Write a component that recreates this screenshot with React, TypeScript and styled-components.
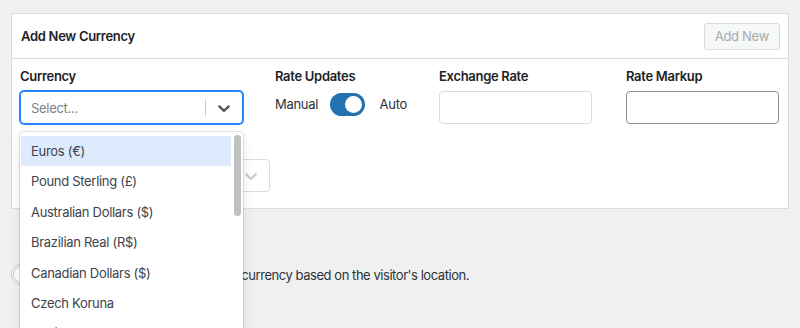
import React from "react";
import styled, { createGlobalStyle } from "styled-components";

const GlobalStyle = createGlobalStyle`
  html, body { margin: 0; padding: 0; overflow: hidden; }
  body {
    background: #f0f0f1;
    font-family: Inter, "Noto Sans", "Liberation Sans", sans-serif;
    font-size: 13px;
    letter-spacing: -0.3px;
    color: #1d2327;
    -webkit-font-smoothing: antialiased;
  }
  * { box-sizing: border-box; }
`;

const Page = styled.div`
  width: 800px;
  height: 328px;
  overflow: hidden;
  padding: 13px 11px 0 11px;
`;

const Card = styled.section`
  background: #fff;
  border: 1px solid #dcdcde;
`;

const CardHeader = styled.header`
  display: flex;
  align-items: center;
  justify-content: space-between;
  height: 45px;
  padding: 0 8px 0 9px;
  border-bottom: 1px solid #dcdcde;
`;

const Title = styled.h2`
  margin: 0;
  font-size: 13px;
  font-weight: 600;
  color: #1d2327;
`;

const Button = styled.button`
  height: 27px;
  padding: 0 10px;
  font-family: inherit;
  font-size: 13px;
  letter-spacing: -0.3px;
  color: #a7aaad;
  background: #f6f7f7;
  border: 1px solid #dcdcde;
  border-radius: 3px;
`;

const CardBody = styled.div`
  padding: 8px 8px 16px 8px;
  display: flex;
  flex-direction: column;
  gap: 11px;
`;

const FieldRow = styled.div`
  display: grid;
  grid-template-columns: 223px 132px 155px 153px;
  column-gap: 32px;
`;

const Field = styled.div<{ $w?: number }>`
  display: flex;
  flex-direction: column;
  gap: 6px;
  position: relative;
  width: ${(p) => (p.$w ? `${p.$w}px` : "auto")};
`;

const Label = styled.label`
  font-size: 13px;
  font-weight: 600;
  line-height: 18px;
  color: #1d2327;
`;

const Control = styled.div<{ $focused?: boolean }>`
  display: flex;
  align-items: center;
  height: 33px;
  background: #fff;
  border: 1px solid ${(p) => (p.$focused ? "#2684ff" : "#dcdcde")};
  box-shadow: ${(p) => (p.$focused ? "0 0 0 1px #2684ff" : "none")};
  border-radius: 4px;
`;

const ValueBox = styled.div`
  flex: 1;
  padding: 0 10px;
  color: #7e8185;
  font-size: 13px;
`;

const Separator = styled.span`
  align-self: stretch;
  width: 1px;
  margin: 7px 0;
  background: #cccccc;
`;

const Indicator = styled.div<{ $color: string }>`
  display: flex;
  align-items: center;
  justify-content: center;
  width: 36px;
  color: ${(p) => p.$color};
`;

const Input = styled.input<{ $dark?: boolean }>`
  width: 153px;
  height: 33px;
  border: 1px solid ${(p) => (p.$dark ? "#8c8f94" : "#dcdcde")};
  border-radius: 4px;
  background: #fff;
  font-family: inherit;
  font-size: 13px;
  outline: none;
`;

const ToggleRow = styled.div`
  display: flex;
  align-items: center;
  gap: 12px;
  height: 24px;
  margin-top: 1px;
  font-size: 13px;
  color: #2c3338;
`;

const Switch = styled.span<{ $on?: boolean }>`
  display: inline-flex;
  align-items: center;
  justify-content: ${(p) => (p.$on ? "flex-end" : "flex-start")};
  width: 37px;
  height: 23px;
  padding: 3px;
  border-radius: 12px;
  background: ${(p) => (p.$on ? "#2271b1" : "#fff")};
  border: ${(p) => (p.$on ? "none" : "1px solid #c3c4c7")};
`;

const Knob = styled.span`
  width: 17px;
  height: 17px;
  border-radius: 50%;
  background: #fff;
`;

const AutoText = styled.span`
  margin-left: 3px;
`;

const Menu = styled.div`
  position: absolute;
  top: 65px;
  left: 0;
  width: 223px;
  height: 300px;
  display: flex;
  background: #fff;
  border-radius: 4px;
  box-shadow: 0 0 0 1px rgba(0, 0, 0, 0.1), 0 4px 11px rgba(0, 0, 0, 0.1);
  overflow: hidden;
  z-index: 10;
`;

const OptionList = styled.ul`
  flex: 1;
  margin: 0;
  padding: 4px 0 0 1px;
  list-style: none;
`;

const Option = styled.li<{ $active?: boolean }>`
  height: 30.4px;
  line-height: 30.4px;
  padding: 0 10px;
  font-size: 13px;
  color: #3c434a;
  background: ${(p) => (p.$active ? "#deebff" : "transparent")};
  white-space: nowrap;
`;

const ScrollTrack = styled.div`
  width: 12px;
  padding: 3px 2px 0 3px;
`;

const ScrollThumb = styled.div`
  width: 7px;
  height: 81px;
  border-radius: 4px;
  background: #c1c1c1;
`;

const SettingRow = styled.div`
  display: flex;
  align-items: center;
  gap: 52px;
  margin-top: 55px;
  font-size: 13px;
  color: #2c3338;
`;

const SettingText = styled.span`
  letter-spacing: -0.45px;
`;

const OffSwitch = styled(Switch)`
  width: 36px;
  height: 21px;
  padding: 1px;
  background: #fff;
  border: 1px solid #c3c4c7;
`;

const OffKnob = styled.span`
  width: 17px;
  height: 17px;
  border-radius: 50%;
  background: #fff;
  border: 1px solid #c3c4c7;
`;

const Chevron = () => (
  <svg width="20" height="20" viewBox="0 0 20 20" fill="currentColor" aria-hidden>
    <path d="M4.516 7.548c0.436-0.446 1.043-0.481 1.576 0l3.908 3.747 3.908-3.747c0.533-0.481 1.141-0.446 1.574 0 0.436 0.445 0.408 1.197 0 1.615-0.406 0.418-4.695 4.502-4.695 4.502-0.217 0.223-0.502 0.335-0.787 0.335s-0.57-0.112-0.789-0.335c0 0-4.287-4.084-4.695-4.502s-0.436-1.170 0-1.615z" />
  </svg>
);

const currencies = [
  "Euros (€)",
  "Pound Sterling (£)",
  "Australian Dollars ($)",
  "Brazilian Real (R$)",
  "Canadian Dollars ($)",
  "Czech Koruna",
  "Danish Krone",
  "Hong Kong Dollar ($)",
  "Hungarian Forint",
  "Indian Rupee",
];

export default function App() {
  return (
    <>
      <GlobalStyle />
      <Page>
        <Card>
          <CardHeader>
            <Title>Add New Currency</Title>
            <Button disabled>Add New</Button>
          </CardHeader>
          <CardBody>
            <FieldRow>
              <Field>
                <Label>Currency</Label>
                <Control $focused>
                  <ValueBox>Select...</ValueBox>
                  <Separator />
                  <Indicator $color="#555">
                    <Chevron />
                  </Indicator>
                </Control>
                <Menu>
                  <OptionList>
                    {currencies.map((c, i) => (
                      <Option key={c} $active={i === 0}>
                        {c}
                      </Option>
                    ))}
                  </OptionList>
                  <ScrollTrack>
                    <ScrollThumb />
                  </ScrollTrack>
                </Menu>
              </Field>
              <Field>
                <Label>Rate Updates</Label>
                <ToggleRow>
                  <span>Manual</span>
                  <Switch $on>
                    <Knob />
                  </Switch>
                  <AutoText>Auto</AutoText>
                </ToggleRow>
              </Field>
              <Field>
                <Label>Exchange Rate</Label>
                <Input />
              </Field>
              <Field>
                <Label>Rate Markup</Label>
                <Input $dark />
              </Field>
            </FieldRow>
            <Field $w={250}>
              <Label>Symbol Position</Label>
              <Control>
                <ValueBox />
                <Separator />
                <Indicator $color="#cccccc">
                  <Chevron />
                </Indicator>
              </Control>
            </Field>
          </CardBody>
        </Card>
        <SettingRow>
          <OffSwitch>
            <OffKnob />
          </OffSwitch>
          <SettingText>Automatically switch the currency based on the visitor's location.</SettingText>
        </SettingRow>
      </Page>
    </>
  );
}
